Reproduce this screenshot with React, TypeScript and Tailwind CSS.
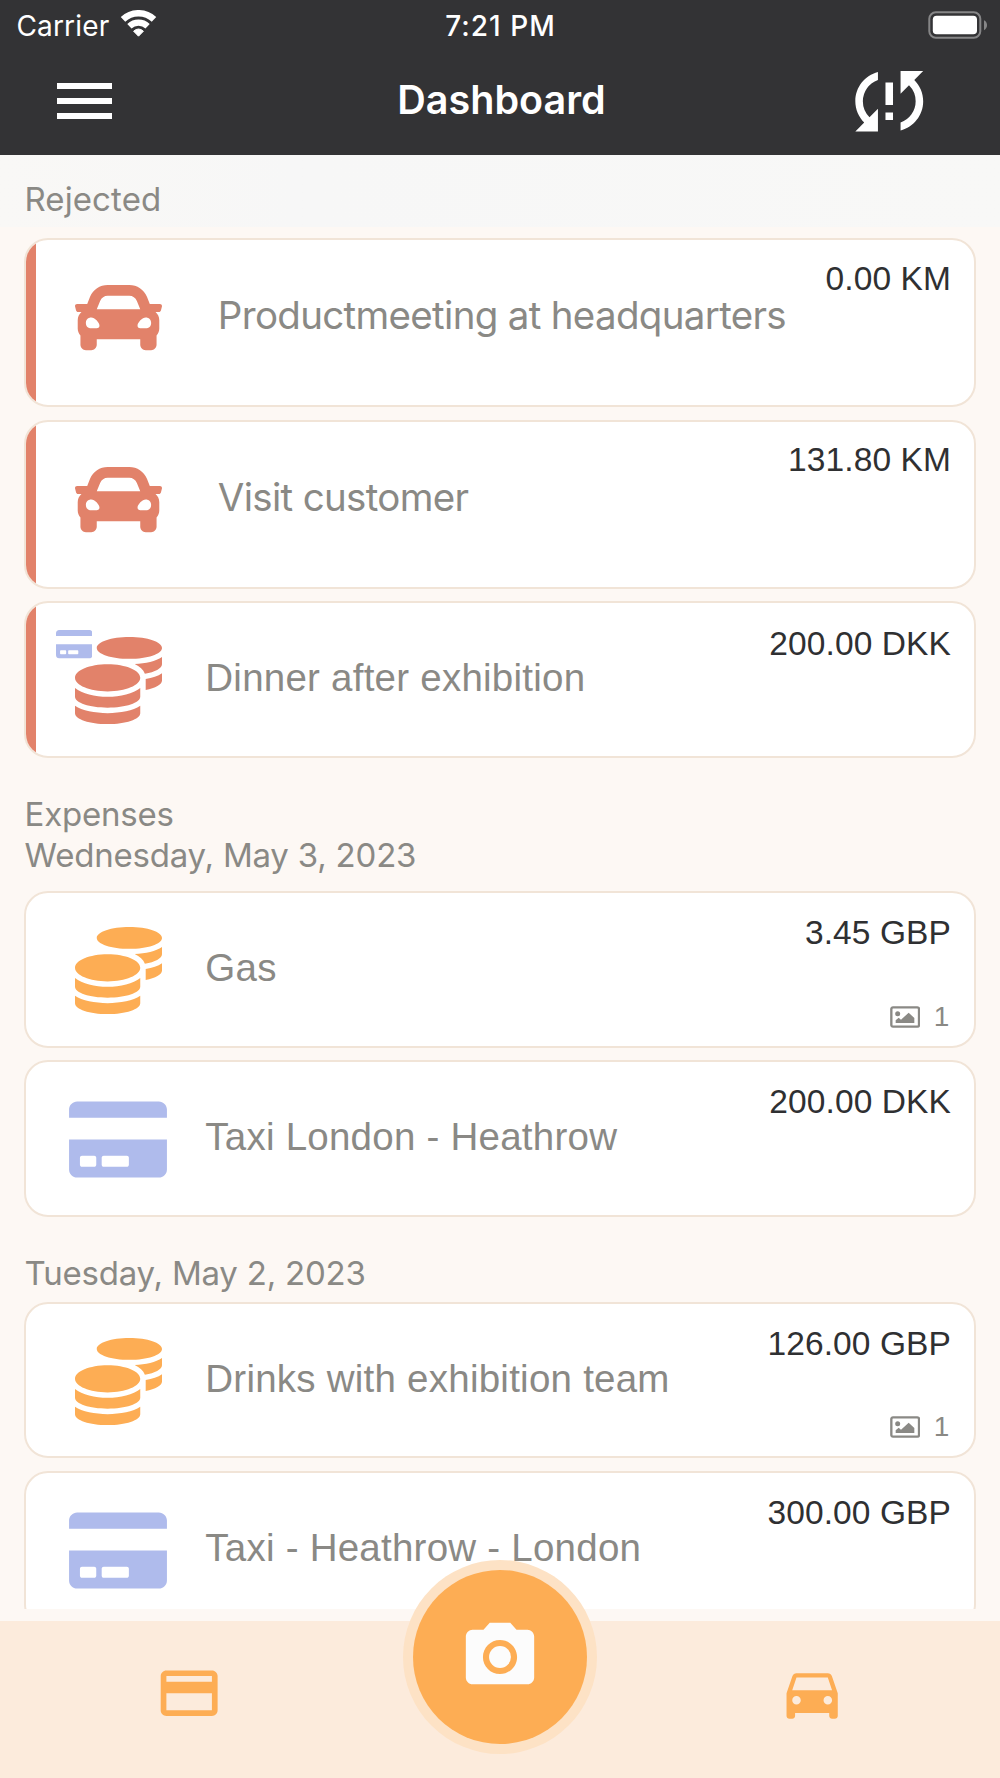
import { FaCar, FaCoins, FaCreditCard } from "react-icons/fa";
import {
  MdCreditCard,
  MdDirectionsCar,
  MdPhotoCamera,
  MdSyncProblem,
} from "react-icons/md";

type Item = {
  kind: "mileage" | "cash" | "card";
  title: string;
  amount: string;
  rejected?: boolean;
  paidByCard?: boolean;
  images?: number;
};

const rejected: Item[] = [
  {
    kind: "mileage",
    title: "Productmeeting at headquarters",
    amount: "0.00 KM",
    rejected: true,
  },
  {
    kind: "mileage",
    title: "Visit customer",
    amount: "131.80 KM",
    rejected: true,
  },
  {
    kind: "cash",
    title: "Dinner after exhibition",
    amount: "200.00 DKK",
    rejected: true,
    paidByCard: true,
  },
];

const wednesday: Item[] = [
  { kind: "cash", title: "Gas", amount: "3.45 GBP", images: 1 },
  { kind: "card", title: "Taxi London - Heathrow", amount: "200.00 DKK" },
];

const tuesday: Item[] = [
  {
    kind: "cash",
    title: "Drinks with exhibition team",
    amount: "126.00 GBP",
    images: 1,
  },
  { kind: "card", title: "Taxi - Heathrow - London", amount: "300.00 GBP" },
];

const WifiIcon = () => (
  <svg width="37" height="28" viewBox="0 0 37 28" fill="none">
    <path
      d="M3 9.4A22.7 22.7 0 0 1 34 9.4"
      stroke="white"
      strokeWidth="6.6"
    />
    <path
      d="M9.4 16.3A13.3 13.3 0 0 1 27.6 16.3"
      stroke="white"
      strokeWidth="6.2"
    />
    <path
      d="M18.5 26.2L13.6 21.2Q18.5 16.8 23.4 21.2Z"
      fill="white"
      stroke="white"
      strokeLinejoin="round"
    />
  </svg>
);

const BatteryIcon = () => (
  <svg width="60" height="28" viewBox="0 0 60 28" fill="none">
    <rect
      x="1.3"
      y="1.3"
      width="51"
      height="25.4"
      rx="6.5"
      stroke="#868687"
      strokeWidth="2"
    />
    <rect x="4.8" y="4.8" width="44.2" height="18.4" rx="3.8" fill="white" />
    <path d="M56 9.2C60 11 60 17.2 56 19.2Z" fill="#868687" />
  </svg>
);

const ImageIcon = () => (
  <svg width="30" height="22" viewBox="0 0 90 66" fill="none">
    <rect
      x="4"
      y="4"
      width="83"
      height="58"
      rx="5"
      stroke="#8a8985"
      strokeWidth="7"
    />
    <circle cx="23" cy="23" r="7.5" fill="#8a8985" />
    <path d="M17 51V43L26 35L33 41L56 20L73 36V51Z" fill="#8a8985" />
  </svg>
);

const ItemIcon = ({ item }: { item: Item }) => {
  const color = item.rejected ? "text-[#e2826a]" : "text-[#fdad54]";
  if (item.kind === "mileage") {
    return <FaCar className={`w-[87px] h-[87px] ${color}`} />;
  }
  if (item.kind === "cash") {
    return <FaCoins className={`w-[87px] h-[87px] ${color}`} />;
  }
  return <FaCreditCard className="w-[98px] h-[87px] text-[#afbbec]" />;
};

const Card = ({ item }: { item: Item }) => {
  const mileage = item.kind === "mileage";
  return (
    <div
      className={`relative flex shrink-0 overflow-hidden rounded-[24px] border-2 border-[#f1e4d7] bg-white ${
        mileage ? "h-[169.3px]" : "h-[156.8px]"
      }`}
    >
      {item.rejected && (
        <div className="absolute left-0 top-0 h-full w-[10px] bg-[#e2826a]" />
      )}
      {item.paidByCard && (
        <FaCreditCard className="absolute left-[29.6px] top-[24.3px] w-[36.5px] h-[32.4px] text-[#afbbec]" />
      )}
      <div className="ml-[43.3px] mt-[34px] flex w-[98px] shrink-0 justify-center">
        <ItemIcon item={item} />
      </div>
      <div
        className={`mt-[51px] whitespace-nowrap text-[38.5px] leading-[48px] text-[#8a8985] ${
          mileage
            ? "ml-[50.5px] font-['Inter',sans-serif] tracking-[-0.68px]"
            : "ml-[38px] font-['Liberation_Sans',sans-serif] tracking-[0.24px]"
        }`}
      >
        {item.title}
      </div>
      <div
        className={`ml-auto flex flex-col items-end pr-[23px] font-['Liberation_Sans',sans-serif] ${
          mileage ? "pt-[18.5px]" : "pt-[20.2px]"
        }`}
      >
        <p className="whitespace-nowrap text-[33.5px] leading-[40px] tracking-[0.1px] text-[#2f3032]">
          {item.amount}
        </p>
        {item.images && (
          <div className="mt-[47.6px] flex items-center gap-[14px] pr-[2px] text-[28px] leading-[32px] text-[#8a8985]">
            <ImageIcon />
            <span>{item.images}</span>
          </div>
        )}
      </div>
    </div>
  );
};

const CardList = ({ items }: { items: Item[] }) => (
  <div className="flex flex-col gap-[12.3px] px-[24px]">
    {items.map((item) => (
      <Card key={item.title} item={item} />
    ))}
  </div>
);

const App = () => {
  return (
    <div className="relative flex h-[1778px] w-[1000px] flex-col overflow-hidden bg-[#fdf8f4] font-['Inter',sans-serif]">
      <header className="h-[154.5px] shrink-0 bg-[#333335] text-white">
        <div className="grid h-[50px] grid-cols-3 items-start">
          <div className="flex pl-[16.5px] pt-[10px]">
            <span className="mr-[11px] -mt-px text-[28px] leading-[34px] tracking-[0.15px]">
              Carrier
            </span>
            <WifiIcon />
          </div>
          <span className="pl-px pt-[9px] text-center text-[28px] font-medium leading-[34px] tracking-[1px]">
            7:21 PM
          </span>
          <div className="flex justify-end pr-[12px] pt-[10.5px]">
            <BatteryIcon />
          </div>
        </div>
        <div className="grid h-[100px] grid-cols-3 items-start">
          <div className="ml-[57px] mt-[33px] flex w-[55px] flex-col gap-[9px]">
            <div className="h-[6px] bg-white" />
            <div className="h-[6px] bg-white" />
            <div className="h-[6px] bg-white" />
          </div>
          <h1 className="mt-[25.4px] pl-[3px] text-center text-[39.5px] font-semibold leading-[50px]">
            Dashboard
          </h1>
          <MdSyncProblem className="ml-auto mr-[65.5px] mt-[6px] h-[90.5px] w-[90.5px]" />
        </div>
      </header>

      <main className="h-[1454.5px] shrink-0 overflow-hidden text-[33px] leading-[41px] tracking-[-0.2px] text-[#8a8985]">
        <div className="h-[72.5px] bg-linear-to-r from-[#f9f8f6] via-[#f7f7f7] via-30% to-[#f8f8f7] pl-[24.5px] pt-[24px] tracking-[0.1px]">
          Rejected
        </div>
        <div className="pt-[11.2px]">
          <CardList items={rejected} />
        </div>
        <div className="pb-[14.5px] pl-[24.5px] pt-[36.3px]">
          <p>Expenses</p>
          <p>Wednesday, May 3, 2023</p>
        </div>
        <CardList items={wednesday} />
        <div className="pb-[7.3px] pl-[24.5px] pt-[36.5px]">
          Tuesday, May 2, 2023
        </div>
        <CardList items={tuesday} />
      </main>

      <footer className="mt-[12px] flex h-[157px] shrink-0 justify-between bg-[#fcebdc] text-[#fdad54]">
        <MdCreditCard className="ml-[154.5px] mt-[38px] h-[68.3px] w-[68.3px]" />
        <MdDirectionsCar className="mr-[154px] mt-[38px] h-[68.3px] w-[68.3px]" />
      </footer>

      {/* capture button, overlaps list and footer */}
      <div className="absolute left-[403px] top-[1560px] flex h-[194px] w-[194px] items-center justify-center rounded-full bg-[#fde2c5]">
        <div className="flex h-[174px] w-[174px] items-center justify-center rounded-full bg-[#fdad54]">
          <MdPhotoCamera className="h-[82px] w-[82px] text-[#fcfcfc]" />
        </div>
      </div>
    </div>
  );
};

export default App;
